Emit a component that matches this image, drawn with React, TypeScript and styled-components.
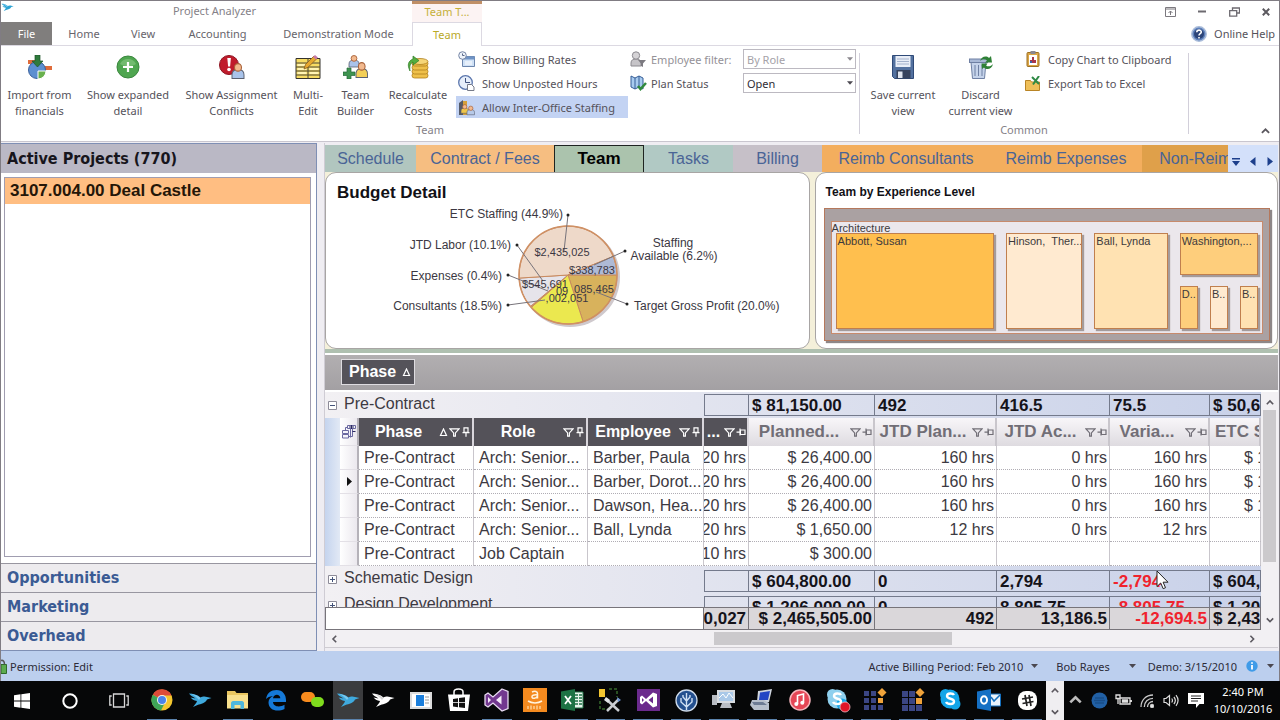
import React from "react";
import styled, { createGlobalStyle, css } from "styled-components";

const ui = `"Noto Sans", "Open Sans", sans-serif`;
const grid = `"Liberation Sans", Arial, sans-serif`;
const head = `"DejaVu Sans Condensed", "DejaVu Sans", sans-serif`;

const GlobalStyle = createGlobalStyle`
  * { box-sizing: border-box; }
  body { margin: 0; font-family: ${ui}; font-size: 11px; color: #55525a; background: #efedf2; }
  button, select { font: inherit; color: inherit; }
  button { border: 0; padding: 0; background: none; cursor: default; }
  h1, h2, ul { margin: 0; padding: 0; font-weight: inherit; font-size: inherit; }
  a { color: inherit; text-decoration: none; }
  svg { display: block; flex: none; }
`;

const Shell = styled.div`
  display: flex;
  flex-direction: column;
  height: 100vh;
  overflow: hidden;
`;

const AppWindow = styled.div`
  position: relative;
  display: flex;
  flex-direction: column;
  flex: 1;
  min-height: 0;
  border: 1px solid #807c83;
  border-width: 1px 1px 0 1px;
`;

/* ---------- title bar ---------- */
const TitleBar = styled.header`
  display: flex;
  height: 21px;
  background: #fff;
`;
const AppMark = styled.div`
  width: 16px;
  padding-top: 2px;
`;
const AppTitle = styled.h1`
  width: 395px;
  line-height: 20px;
  text-align: center;
  color: #858188;
`;
const ContextTitle = styled.div`
  width: 70px;
  border-top: 3px solid #c08f66;
  background: #fcf3f3;
  line-height: 15px;
  text-align: center;
  color: #c5b03a;
`;
const WindowButtons = styled.div`
  display: flex;
  margin-left: auto;
  button {
    width: 32px;
    padding-left: 6px;
    display: flex;
    align-items: center;
    justify-content: center;
  }
`;

const RibbonTabs = styled.nav`
  display: flex;
  height: 24px;
  background: #fff;
  border-bottom: 1px solid #dcd9e2;
`;
const RibbonTab = styled.button<{ $w: number; $kind?: "file" | "active" }>`
  width: ${(p) => p.$w}px;
  line-height: 23px;
  color: #67646b;
  ${(p) =>
    p.$kind === "file" &&
    css`
      background: #807e7d;
      color: #fff;
    `}
  ${(p) =>
    p.$kind === "active" &&
    css`
      height: 24px;
      background: #fff;
      border: 1px solid #dcd9e2;
      border-bottom: 0;
      line-height: 22px;
      color: #b9a928;
    `}
`;
const HelpLink = styled.a`
  display: flex;
  align-items: center;
  gap: 7px;
  margin-left: auto;
  padding-right: 4px;
`;

/* ---------- ribbon ---------- */
const Ribbon = styled.div`
  display: flex;
  height: 96px;
  background: #fff;
  border-bottom: 1px solid #c9c6cf;
`;
const Group = styled.section`
  display: flex;
  flex-direction: column;
`;
const GroupBody = styled.div`
  display: flex;
  height: 75px;
  padding-top: 2px;
`;
const GroupLabel = styled.div`
  line-height: 17px;
  text-align: center;
  color: #858188;
`;
const Divider = styled.div`
  width: 1px;
  margin: 7px 0;
  background: #d2cfda;
`;
const BigButton = styled.button<{ $w: number }>`
  display: flex;
  flex-direction: column;
  align-items: center;
  width: ${(p) => p.$w}px;
  padding-top: 7px;
  line-height: 16px;
  white-space: pre;
  svg {
    margin-bottom: 8px;
  }
`;
const SmallColumn = styled.div<{ $w: number }>`
  display: flex;
  flex-direction: column;
  gap: 2px;
  width: ${(p) => p.$w}px;
`;
const SmallButton = styled.button<{ $on?: boolean }>`
  display: flex;
  align-items: center;
  gap: 7px;
  height: 22px;
  padding-left: 2px;
  white-space: nowrap;
  background: ${(p) => (p.$on ? "#c3d3f3" : "none")};
`;
const IconSlot = styled.span`
  display: flex;
  justify-content: center;
  width: 17px;
  margin-left: 7px;
`;
const FieldRow = styled.div<{ $muted?: boolean }>`
  display: flex;
  align-items: center;
  height: 22px;
  padding: 0 3px 0 2px;
  color: ${(p) => (p.$muted ? "#949197" : "#55525a")};
  label {
    width: 96px;
    padding-left: 4px;
    white-space: nowrap;
  }
`;
const SelectBox = styled.div`
  position: relative;
  flex: 1;
  select {
    width: 100%;
    height: 20px;
    padding: 0 3px;
    appearance: none;
    border: 1px solid #bcb9c1;
    border-radius: 0;
    background: #fff;
    color: #2f2c33;
    opacity: 1;
    display: block;
  }
  select:disabled {
    color: #a5a2a8;
  }
  svg {
    position: absolute;
    right: 3px;
    top: 8px;
  }
`;
const Collapse = styled.button`
  margin-left: auto;
  align-self: flex-end;
  padding: 5px 9px;
`;

/* ---------- workspace ---------- */
const Workspace = styled.main`
  display: flex;
  flex: 1;
  min-height: 0;
  gap: 7px;
  padding-top: 1px;
`;
const Sidebar = styled.aside`
  display: flex;
  flex-direction: column;
  width: 316px;
  flex: none;
  border: 1px solid #7f8fb4;
  border-left: 0;
  background: #fff;
  font-family: ${head};
  font-weight: bold;
  font-size: 16px;
`;
const SideHead = styled.h2`
  height: 29px;
  padding-left: 6px;
  line-height: 29px;
  background: #bab8c5;
  color: #17151c;
  font-weight: bold;
`;
const ProjectList = styled.ul`
  flex: 1;
  margin: 4px 5px 6px 3px;
  border: 1px solid #a09db0;
  list-style: none;
`;
const Project = styled.li`
  height: 26px;
  padding-left: 5px;
  line-height: 26px;
  font-family: ${grid};
  font-size: 17px;
  background: #ffbe82;
  color: #241608;
`;
const SideLink = styled.a`
  height: 29px;
  padding-left: 6px;
  line-height: 27px;
  border-top: 1px solid #9896a0;
  background: #edebee;
  color: #3b5b94;
`;
const Content = styled.section`
  display: flex;
  flex-direction: column;
  flex: 1;
  min-width: 0;
  padding: 2px 1px 3px 0;
  border-left: 1px solid #cfccd4;
`;
const TabStrip = styled.div`
  display: flex;
  height: 27px;
  font-family: ${grid};
  font-size: 16px;
`;
const Tabs = styled.div`
  display: flex;
  flex: 1;
  min-width: 0;
  overflow: hidden;
`;
const ViewTab = styled.button<{ $w: number; $bg: string; $active?: boolean }>`
  flex: none;
  width: ${(p) => p.$w}px;
  background: ${(p) => p.$bg};
  color: #4a6496;
  ${(p) =>
    p.$active &&
    css`
      border: 1px solid #1f2421;
      border-bottom: 0;
      font-weight: bold;
      font-size: 17px;
      color: #000;
    `}
`;
const TabNav = styled.div`
  display: flex;
  align-items: center;
  width: 50px;
  background: #d3e0fa;
  button {
    display: flex;
    flex: 1;
    justify-content: center;
    padding-top: 6px;
  }
`;
const Cards = styled.div`
  display: flex;
  gap: 5px;
  background: #f4f0da;
  border-bottom: 4px solid #afc0b0;
  font-family: ${grid};
`;
const Card = styled.section<{ $grow: number }>`
  flex: ${(p) => p.$grow} 1 0;
  min-width: 0;
  height: 177px;
  padding: 0 7px 0 8px;
  border: 1px solid #a8a5a4;
  border-radius: 11px;
  background: #fff;
`;
const CardTitle = styled.h2<{ $size: number }>`
  height: 35px;
  padding: 4px 0 0 2px;
  line-height: 31px;
  font-size: ${(p) => p.$size}px;
  font-weight: bold;
  color: #121116;
`;
const PieTitle = styled(CardTitle)`
  height: 32px;
  padding-left: 3px;
`;

/* tree map */
const MapFrame = styled.div`
  height: 133px;
  padding: 12px 6px 6px;
  border: 1px solid #b5785c;
  background: #aaa1a2;
  box-shadow: 2px 2px 1px #8d8788;
`;
const MapGroup = styled.div`
  height: 113px;
  padding: 0 4px 4px;
  border: 1px solid #c78a6c;
  background: #ebe7ec;
  font-size: 11px;
  line-height: 12px;
  color: #3d3a3c;
`;
const MapLabel = styled.div`
  height: 11px;
  margin-left: -4px;
`;
const MapRow = styled.div<{ $h: number }>`
  display: flex;
  gap: 12px;
  height: ${(p) => p.$h}px;
`;
const MapStack = styled.div`
  display: flex;
  flex-direction: column;
  gap: 11px;
  flex: 81 1 0;
  min-width: 0;
`;
const Tile = styled.div<{ $grow: number; $bg: string }>`
  flex: ${(p) => p.$grow} 1 0;
  min-width: 0;
  padding: 1px 0 0 1px;
  overflow: hidden;
  white-space: pre;
  border: 1px solid #c07f4e;
  background: ${(p) => p.$bg};
  box-shadow: 2px 2px 1px #a49b9b;
`;

/* ---------- data grid ---------- */
const GroupPanel = styled.div`
  height: 39px;
  padding: 4px 16px;
  border: solid #fff;
  border-width: 2px 0 2px;
  background: linear-gradient(#b2afb1, #a3a0a3);
  font-family: ${grid};
`;
const GroupChip = styled.button`
  display: flex;
  align-items: center;
  gap: 6px;
  width: 74px;
  height: 26px;
  padding-left: 7px;
  border: 1px solid #dedce0;
  background: #55535a;
  color: #fff;
  font-size: 16px;
  font-weight: bold;
`;
const GridArea = styled.div`
  display: flex;
  flex: 1;
  min-height: 0;
  background: #f2f0f3;
`;
const GridMain = styled.div`
  display: flex;
  flex-direction: column;
  flex: 1;
  min-width: 0;
`;
const GridBody = styled.div`
  flex: 1;
  min-height: 0;
  overflow: hidden;
`;
const Table = styled.table`
  width: 100%;
  table-layout: fixed;
  border-collapse: separate;
  border-spacing: 0;
  font-family: ${grid};
  font-size: 16px;
  color: #3d3a42;
  td,
  th {
    padding: 0;
    overflow: hidden;
    white-space: nowrap;
    text-align: left;
  }
`;
const GroupTr = styled.tr`
  background: linear-gradient(90deg, #f2f0f3 0%, #e6e7f0 30%, #c8d1e9 100%);
  > td {
    height: 26px;
    vertical-align: top;
  }
`;
const GroupName = styled.div`
  display: flex;
  align-items: center;
  gap: 7px;
  height: 23px;
  padding-left: 3px;
  button {
    padding-top: 4px;
  }
`;
const Sum = styled.div<{ $first?: boolean; $neg?: boolean; $lead: number }>`
  height: 22px;
  margin-top: ${(p) => p.$lead}px;
  padding-left: 3px;
  line-height: 21px;
  border: 1px solid #747a8c;
  border-left-width: ${(p) => (p.$first ? 1 : 0)}px;
  font-size: 17px;
  font-weight: bold;
  color: ${(p) => (p.$neg ? "#f0232d" : "#15131a")};
`;
const Indent = styled.td`
  background: linear-gradient(90deg, #c5d4ee, #e2e9f5);
`;
const Selector = styled.td`
  border-bottom: 1px solid #e3e0e6;
  border-right: 2px solid #b5b2b9;
  background: linear-gradient(90deg, #fff, #ebe8ee);
  svg {
    margin-left: 7px;
  }
`;
const ChooserCell = styled(Selector)`
  svg {
    margin-left: 2px;
  }
`;
const Th = styled.th<{ $dark?: boolean }>`
  height: 28px;
  font-size: ${(p) => (p.$dark ? 16 : 17)}px;
  font-weight: bold;
  border-right: 2px solid #d9d6dc;
  ${(p) =>
    p.$dark
      ? css`
          background: #545259;
          color: #fff;
        `
      : css`
          background: linear-gradient(#f8f6f9, #dedbe0);
          color: #716e76;
          border-right-color: #c9c6cc;
        `}
`;
const ThInner = styled.div`
  display: flex;
  align-items: center;
  justify-content: flex-end;
  gap: 1px;
  height: 28px;
  padding-right: 1px;
  span {
    flex: 1;
    text-align: center;
  }
`;
const Td = styled.td`
  height: 24px;
  border-right: 1px solid #c9c6cc;
  border-bottom: 1px dotted #b0adb4;
  background: #fff;
`;
const TextCell = styled.div`
  padding-left: 5px;
  white-space: nowrap;
`;
const NumCell = styled.div<{ $neg?: boolean }>`
  display: flex;
  justify-content: flex-end;
  padding-right: 2px;
  overflow: hidden;
  color: ${(p) => (p.$neg ? "#f0232d" : "inherit")};
`;
const CutCell = styled.div`
  padding-left: 34px;
  overflow: hidden;
`;
const FootTd = styled.td<{ $blank?: boolean }>`
  height: 23px;
  border: 1px solid #77747a;
  border-left-width: ${(p) => (p.$blank ? 1 : 0)}px;
  background: ${(p) => (p.$blank ? "#fff" : "#dad7da")};
  font-size: 17px;
  font-weight: bold;
  color: #15131a;
`;
const FootCut = styled.div`
  padding-left: 3px;
`;
const VScroll = styled.div`
  display: flex;
  flex-direction: column;
  align-items: center;
  width: 17px;
  padding: 7px 0 6px;
  background: #f2f0f3;
`;
const VThumb = styled.div`
  width: 13px;
  flex: 153 1 0;
  margin-top: 3px;
  background: #cbc9cc;
`;
const VRest = styled.div`
  flex: 54 1 0;
`;
const HScroll = styled.div`
  display: flex;
  align-items: center;
  height: 18px;
  padding: 0 22px 0 6px;
  border-bottom: 1px solid #cfccd2;
  background: #f2f0f3;
`;
const HSpace = styled.div<{ $grow: number }>`
  flex: ${(p) => p.$grow} 1 0;
`;
const HThumb = styled.div`
  flex: 238 1 0;
  height: 13px;
  background: #cbc9cc;
`;

/* ---------- status bar ---------- */
const StatusBar = styled.footer`
  display: flex;
  align-items: center;
  height: 30px;
  padding-right: 5px;
  background: #bccfee;
  color: #2c2b38;
`;
const Permission = styled.span`
  display: flex;
  align-items: center;
  gap: 3px;
  margin-right: auto;
`;
const StatusItem = styled.button<{ $gap: number; $ml: number }>`
  display: flex;
  align-items: center;
  gap: ${(p) => p.$gap}px;
  margin-left: ${(p) => p.$ml}px;
`;

/* ---------- taskbar ---------- */
const Taskbar = styled.div`
  display: flex;
  height: 39px;
  padding-right: 4px;
  background: #060708;
  color: #fff;
`;
const SystemButton = styled.button<{ $w: number }>`
  display: flex;
  align-items: center;
  justify-content: center;
  width: ${(p) => p.$w}px;
`;
const Apps = styled.div`
  display: flex;
  flex: 1;
`;
const AppButton = styled.button<{ $run?: boolean; $active?: boolean }>`
  display: flex;
  flex: 1;
  align-items: center;
  justify-content: center;
  margin: 0 4px;
  border-bottom: 1px solid ${(p) => (p.$run ? "#5b83ad" : "transparent")};
  ${(p) =>
    p.$active &&
    css`
      margin: 0 1px;
      background: #3b3c3e;
    `}
`;
const TaskScroll = styled.div`
  display: flex;
  flex-direction: column;
  justify-content: space-between;
  align-items: center;
  width: 18px;
  padding: 6px 0 4px;
  background: #efeef1;
`;
const Tray = styled.div`
  display: flex;
  align-items: center;
`;
const Clock = styled.time`
  width: 66px;
  padding-top: 2px;
  text-align: center;
  line-height: 17px;
  white-space: nowrap;
`;
const Pointer = styled.svg`
  position: absolute;
  left: 90.4%;
  bottom: 91px;
`;

/* ---------- small drawings ---------- */
const Chevron = ({ dir, w = 8, c = "#5b585f" }: { dir: "up" | "down" | "left" | "right"; w?: number; c?: string }) => {
  const d = {
    up: "M1 6.5 5 2.5 9 6.5",
    down: "M1 3 5 7 9 3",
    left: "M6.5 1 2.5 5 6.5 9",
    right: "M3 1 7 5 3 9",
  }[dir];
  return (
    <svg width={w} height={w} viewBox="0 0 10 10" fill="none" stroke={c} strokeWidth="2">
      <path d={d} />
    </svg>
  );
};
const Caret = ({ c = "#4b4850", w = 7 }: { c?: string; w?: number }) => (
  <svg width={w} height="4" viewBox="0 0 7 4" fill={c}>
    <path d="M0 0h7L3.5 4z" />
  </svg>
);
const Asc = () => (
  <svg width="9" height="9" viewBox="0 0 9 9" fill="none" stroke="currentColor" strokeWidth="1.2">
    <path d="M4.5 1 7.5 7.5h-6z" />
  </svg>
);
const Funnel = () => (
  <svg width="11" height="9" viewBox="0 0 12 10" fill="none" stroke="currentColor" strokeWidth="1.3">
    <path d="M1 1h10L7 5.5V9H5V5.5z" />
  </svg>
);
const Pin = ({ side }: { side?: boolean }) => (
  <svg width="10" height="10" viewBox="0 0 10 10" fill="none" stroke="currentColor" strokeWidth="1.2">
    {side ? <path d="M9 3v4.500H4.400V3zM4 1.500v7M4 5.200H.5" /> : <path d="M3 .8h4v4.600H3zM1.500 5.600h7M5 6v3.800" />}
  </svg>
);
const Expander = ({ open }: { open?: boolean }) => (
  <svg width="9" height="9" viewBox="0 0 9 9" fill="none" stroke="#8d8b98">
    <path d="M.5.5h8v8h-8z" fill="#fff" />
    <path d={open ? "M2 4.5h5" : "M2 4.5h5M4.5 2v5"} stroke="#44537a" />
  </svg>
);
const FieldChooser = () => (
  <svg width="14" height="15" viewBox="0 0 14 15" fill="#f4f3fa" stroke="#6a68a0">
    <path d="M3.500 3.500h7v9h-7z" />
    <path d="M5.500 1.500h8v3h-8z" />
    <path d="M.5 6.500h6v3h-6zM.5 10.500h6v3.500h-6zM8.500 4.500v9" />
    <path d="M7 3h5M9.500 1v4M10.500 7.500h3" stroke="#2c2a60" />
  </svg>
);
const Bird = ({ w = 24, c = "#3fa9dd", c2 = "#7cc9ee" }: { w?: number; c?: string; c2?: string }) => (
  <svg width={w} height={(w * 2) / 3} viewBox="0 0 24 16">
    <path d="M1 1.500c4 0 8 1 11.500 4C14 4.500 17 4 19 5l4.500 1-4.500 1.500C17.500 11 13 12 9.500 13L5 15c2-2.500 3.500-4 4-6C6 8.500 3.500 7 2.500 5.500l5 1C5 5 2.500 3.500 1 1.500z" fill={c} />
    <path d="M3 1.800c4 .8 7 2 9.500 4.200L11 8C8.500 5 6 3.300 3 1.800z" fill={c2} />
  </svg>
);
const Person = ({ x, y, body }: { x: number; y: number; body: string }) => (
  <g transform={`translate(${x} ${y})`}>
    <path d="M0 12V9c0-3 2-4 5-4s5 1 5 4v3z" fill={body} stroke="#5a6070" strokeWidth=".8" />
    <circle cx="5" cy="3.400" r="2.900" fill="#f2b98e" stroke="#a86138" strokeWidth=".9" />
  </g>
);

const icons = {
  importFin: (
    <svg width="24" height="24" viewBox="0 0 24 24">
      <path d="M0 5h8v4H0zM16 11h8v4h-8z" fill="#e06c3b" />
      <circle cx="9" cy="15" r="8.500" fill="#5c8fd0" stroke="#3c619c" />
      <path d="M10 16h8a8 8 0 0 1-8 8z" fill="#69b14e" stroke="#fff" />
      <path d="M7 0h5v6h3l-5.500 6L4 6h3z" fill="#2f7a3c" stroke="#1d5528" strokeWidth=".7" />
    </svg>
  ),
  expand: (
    <svg width="24" height="24" viewBox="0 0 24 24">
      <circle cx="12" cy="12" r="11" fill="#4fa650" stroke="#3a873e" />
      <path d="M4 9a9 9 0 0 1 16 0c-5 3-11 3-16 0z" fill="#8aca84" opacity=".6" />
      <path d="M12 7v10M7 12h10" stroke="#fff" strokeWidth="2.200" />
    </svg>
  ),
  conflict: (
    <svg width="26" height="24" viewBox="0 0 26 24">
      <circle cx="10" cy="10" r="9.500" fill="#c01c2c" stroke="#8e1420" />
      <path d="M8.300 3h3.600l-.8 8.500h-2z" fill="#fff" />
      <circle cx="10" cy="14.500" r="1.800" fill="#fff" />
      <g transform="translate(13 8) scale(1.200 1.300)">
        <Person x={0} y={0} body="#a9c3ea" />
      </g>
    </svg>
  ),
  multi: (
    <svg width="26" height="24" viewBox="0 0 26 24">
      <path d="M1 3.500h24v20H1z" fill="#f7dc62" stroke="#34322c" />
      <path d="M1 8h24M1 12h24M1 16h24M1 20h24M13 3.500v20" stroke="#4a4638" strokeWidth="1" />
      <path d="M2.500 10h9M14.500 18h9M2.500 18h9M2.500 14h9M14.500 14h9" stroke="#fff4b4" strokeWidth="2" />
      <path d="m9 14 1.500-4.500L19 1l3 2.500-9 8.800z" fill="#e7a92f" stroke="#8a5e1a" strokeWidth=".8" />
      <path d="m18 2 2-2 3 2.500-2 2z" fill="#c879a7" />
    </svg>
  ),
  builder: (
    <svg width="25" height="24" viewBox="0 0 25 24">
      <Person x={6} y={0} body="#a9c3ea" />
      <g transform="translate(13 7) scale(1.150 1.300)">
        <Person x={0} y={0} body="#f3cf57" />
      </g>
      <path d="M4 13h4v4h4v3.500H8v3.500H4v-3.500H0V17h4z" fill="#3f9450" stroke="#24683a" strokeWidth=".7" />
    </svg>
  ),
  recalc: (
    <svg width="22" height="24" viewBox="0 0 22 24">
      <g fill="#efc04a" stroke="#b07f1c" strokeWidth=".8">
        <rect x="5" y="18" width="16" height="5" rx="2.500" />
        <rect x="5" y="14" width="16" height="5" rx="2.500" />
        <rect x="5" y="10" width="16" height="5" rx="2.500" />
        <rect x="5" y="6" width="16" height="5" rx="2.500" />
        <ellipse cx="13" cy="6.500" rx="8" ry="3" fill="#f6d678" />
      </g>
      <path d="M3 16C0 10 1 6 6 4V1l6 4.500L6 10V7c-3 1.500-3.500 4-3 9z" fill="#55ad3f" stroke="#2f7d28" strokeWidth=".7" />
    </svg>
  ),
  rates: (
    <svg width="17" height="16" viewBox="0 0 17 16">
      <path d="M4.500 5.500h12v10h-12z" fill="#cfe1f6" stroke="#6c86ad" />
      <path d="M4.500 5.500h12v3h-12z" fill="#6f93c5" />
      <circle cx="4.500" cy="4.500" r="3.800" fill="#eef3fa" stroke="#7484a4" />
      <path d="M4.500 2.500v2h2" stroke="#5a6888" fill="none" />
      <path d="M7 11h7M7 13h7" stroke="#fff" />
    </svg>
  ),
  hours: (
    <svg width="17" height="16" viewBox="0 0 17 16">
      <circle cx="7.500" cy="7.500" r="6.800" fill="#e6eefa" stroke="#5b76ad" strokeWidth="1.300" />
      <path d="M7.500 3v4.500H12" stroke="#40527e" fill="none" />
      <path d="M9.500 9.500h4l2.500 2.500v3.500H9.500z" fill="#fff" stroke="#767a88" />
    </svg>
  ),
  office: (
    <svg width="17" height="17" viewBox="0 0 17 17">
      <path d="M1 4 5 1v15H1z" fill="#555a66" />
      <path d="M5 2h4v14H5z" fill="#d6a03a" />
      <g transform="scale(.75)">
        <Person x={4} y={7} body="#f0c74a" />
        <Person x={12} y={9} body="#b6c9e8" />
      </g>
    </svg>
  ),
  filterPerson: (
    <svg width="17" height="16" viewBox="0 0 17 16">
      <path d="M1 15v-3c0-3 2-4 5-4s5 1 5 4v3z" fill="#c6c4c8" stroke="#8c8a90" />
      <circle cx="6" cy="4.500" r="3.700" fill="#d5d3d6" stroke="#8c8a90" />
      <path d="M8 9h8l-3 3.500V16l-2-1v-2.500z" fill="#7c7a80" />
    </svg>
  ),
  plan: (
    <svg width="17" height="16" viewBox="0 0 17 16">
      <path d="m1 1 4 2 4-2 4 2v11l-4-2-4 2-4-2z" fill="#a8cbef" stroke="#355d96" />
      <path d="M5 3v11M9 1v11" stroke="#355d96" />
      <path d="m8 11 2.500 3L16 8" stroke="#318a3c" strokeWidth="2.500" fill="none" />
    </svg>
  ),
  save: (
    <svg width="24" height="24" viewBox="0 0 24 24">
      <path d="M1.500.5h21v23h-19l-2-2z" fill="#53719f" stroke="#2f4a78" />
      <path d="M4.500 1h15v11h-15z" fill="#e9eef7" />
      <path d="M6 4h12M6 6.500h12M6 9h12" stroke="#a4b2cc" />
      <path d="M5.500 15h14v8.500h-14z" fill="#37435d" />
      <path d="M7 16.500h4.500V23H7z" fill="#dfe4ee" />
    </svg>
  ),
  discard: (
    <svg width="26" height="24" viewBox="0 0 26 24">
      <path d="M3 7h15l-1.500 16.500h-12z" fill="#c5d3ea" stroke="#6f80a3" />
      <path d="M7 10v11M10.500 10v11M14 10v11" stroke="#6f80a3" />
      <rect x="1.500" y="4" width="18" height="3.500" fill="#a9b9d6" stroke="#6f80a3" />
      <path d="M12 6c1-4 6-6 9-3l2-2 1 6.500h-7l2-2c-2-2-5-1.500-7 .5zM25 9c-1 5-6 6.500-9 3.500L14 14l-.5-5.500h6L18 10.500c2 1.500 5 1 7-1.500z" fill="#2f8136" />
    </svg>
  ),
  clipboard: (
    <svg width="14" height="16" viewBox="0 0 14 16">
      <rect x="1" y="1.500" width="12" height="14" rx="1" fill="#dba646" stroke="#9c6f22" />
      <path d="M3 4h8v10H3z" fill="#fff" />
      <path d="M4.500 0h5v3h-5z" fill="#8a8790" />
      <path d="M4 12V9h2V6h2v3h2v3z" fill="#a8364a" />
      <path d="M4 10h2v2H4z" fill="#3d62a5" />
    </svg>
  ),
  exportXls: (
    <svg width="16" height="15" viewBox="0 0 16 15">
      <path d="M.5 4.500h5l1 1.500h8v8.500H.5z" fill="#efbf58" stroke="#b98425" />
      <path d="m7 1 7 7M14 0 8 8.500" stroke="#2f8a46" strokeWidth="2" />
    </svg>
  ),
};

const VS = ({ box }: { box?: boolean }) => (
  <svg width="25" height="24" viewBox="0 0 25 24">
    {box ? <path d="M1 1h23v22H1z" fill="#6b2a8d" /> : null}
    <path
      d={box ? "M17 4.500 21 6v12l-4 1.500-7-6.500-4 3.500-2-1.500V9l2-1.500 4 3.500z" : "M18 1l6 2.500v17L18 23l-9-8-5 4-3-2V7l3-2 5 4z"}
      fill={box ? "#fff" : "#72388f"}
      stroke={box ? "none" : "#e9dcf2"}
      strokeWidth="1.300"
    />
    <path d={box ? "M17 8.500v7L12.500 12zM6 10v4l2-2z" : "M17.500 7.500v9L12 12zM4 9v6l3-3z"} fill={box ? "#6b2a8d" : "#f3eaf8"} />
  </svg>
);
const Skype = ({ busy }: { busy?: boolean }) => (
  <svg width="26" height="26" viewBox="0 0 26 26">
    <circle cx="12" cy="12" r="9.500" fill={busy ? "#8fd0ee" : "#13a5e8"} />
    <circle cx="7.500" cy="7.500" r="5.500" fill={busy ? "#8fd0ee" : "#13a5e8"} />
    <circle cx="17" cy="17" r="5.500" fill="#13a5e8" />
    <path d="M16 8c-1-2-7-2.500-7 1 0 3.500 7 2 7 5.500s-6.500 3-8 .5" fill="none" stroke="#fff" strokeWidth="2.400" />
    {busy ? <circle cx="20" cy="20" r="5" fill="#e01528" stroke="#f7b9bf" strokeWidth=".8" /> : null}
  </svg>
);
const Tiles = ({ big }: { big?: boolean }) => (
  <svg width="25" height="24" viewBox="0 0 25 24">
    {[0, 1, 2].map((r) =>
      [0, 1, 2].map((c) => (
        <rect
          key={`${r}${c}`}
          x={c * 7 + 1}
          y={r * 7 + 3}
          width={big ? 6 : 5}
          height={big ? 6 : 5}
          fill={c === 2 && r === 1 ? "#f0a33a" : "#3b4684"}
          opacity={c === 2 && r === 0 ? 0 : 1}
        />
      ))
    )}
    <path d="m19 0 4.500 4.500L19 9l-4.500-4.500z" fill="#f0a33a" />
  </svg>
);

type AppItem = { name: string; run?: boolean; active?: boolean; art: React.ReactNode };
const apps: AppItem[] = [
  {
    name: "Chrome",
    run: true,
    art: (
      <svg width="22" height="22" viewBox="0 0 22 22">
        <circle cx="11" cy="11" r="10.500" fill="#f3c62f" />
        <path d="M11 11 1.800 5.700A10.500 10.500 0 0 1 20.500 6.500H11z" fill="#dd4b39" />
        <path d="M11 11 1.800 5.700A10.500 10.500 0 0 0 10 21.500l4-8z" fill="#3fa557" />
        <circle cx="11" cy="11" r="5" fill="#f5f3f0" />
        <circle cx="11" cy="11" r="4" fill="#4a83ea" />
      </svg>
    ),
  },
  { name: "Vision", art: <Bird w={24} /> },
  {
    name: "File Explorer",
    run: true,
    art: (
      <svg width="23" height="20" viewBox="0 0 23 20">
        <path d="M1 1h8l1.500 2H22v15H1z" fill="#e9c660" />
        <path d="M1 5h21v13.500H1z" fill="#f8e08e" />
        <path d="M5 19v-6c0-1 1-2 2-2h9c1 0 2 1 2 2v6h-3.500v-4h-6v4z" fill="#4fb7dc" />
      </svg>
    ),
  },
  {
    name: "Edge",
    art: (
      <svg width="22" height="22" viewBox="0 0 22 22">
        <path d="M1 10C2 4 6 1 11.500 1 18 1 21 6 21 11v2H8c.3 5 7 5.500 11.500 2.700V20C12 23.500 3.500 21 3.500 13.500c0-3 1.500-5 4.500-6.500-3.500.3-5.500 1.500-7 3zM8 9.300h7.300C15.300 4.500 8.500 4.500 8 9.300z" fill="#1579d8" />
      </svg>
    ),
  },
  {
    name: "Chat",
    art: (
      <svg width="24" height="16" viewBox="0 0 24 16">
        <rect x="0" y="0" width="14" height="10" rx="5" fill="#f78b1e" />
        <rect x="10" y="5" width="13" height="10" rx="5" fill="#7fdc1d" />
      </svg>
    ),
  },
  { name: "Vision Client", run: true, active: true, art: <Bird w={24} /> },
  { name: "Vision Admin", art: <Bird w={24} c="#fff" c2="#d5d5d5" /> },
  {
    name: "News",
    art: (
      <svg width="22" height="17" viewBox="0 0 22 17">
        <path d="M0 0h22v17H0z" fill="#dcdcdc" />
        <path d="M2 2h18v13H2z" fill="#fff" />
        <path d="M6 3h8v11H6z" fill="#1c7fdc" />
        <path d="M15 5h4M15 8h4M15 11h4" stroke="#999" />
      </svg>
    ),
  },
  {
    name: "Store",
    art: (
      <svg width="22" height="24" viewBox="0 0 22 24">
        <path d="M6 7V4c0-4 9-4 9 0v3" fill="none" stroke="#fff" strokeWidth="1.500" />
        <path d="M0 6.500h22L20 23H2z" fill="#fff" />
        <path d="m5 11 5-.8v4H5zM11 10l6-.8v5h-6zM5 15h5v4.200l-5-.7zM11 15h6v5l-6-.7z" fill="#111" />
      </svg>
    ),
  },
  { name: "Visual Studio", run: true, art: <VS /> },
  {
    name: "Music",
    art: (
      <svg width="24" height="24" viewBox="0 0 24 24">
        <path d="M0 0h24v24H0z" fill="#f48a1f" />
        <path d="M9 4c3-1.500 5.500-.5 5.500 1.500v5M14.500 7c-4-.5-6 .5-5.500 2.200.5 1.800 4.500 1.300 5.500-1.200M5 13c4 2.500 10 2.500 14 0" fill="none" stroke="#fff3dd" strokeWidth="1.500" />
        <path d="M5 18v3M8 17.500v4M11 18v3M14 17.500v4M17 18v3" stroke="#ffd9a3" strokeWidth="1.300" />
      </svg>
    ),
  },
  {
    name: "Excel",
    run: true,
    art: (
      <svg width="23" height="22" viewBox="0 0 23 22">
        <path d="M12 3h10v16H12z" fill="#e8f3ec" stroke="#1e7244" />
        <path d="M14 6h3M18 6h3M14 9h3M18 9h3M14 12h3M18 12h3M14 15h3M18 15h3" stroke="#1e7244" strokeWidth="1.500" />
        <path d="M0 2.500 14 0v22L0 19.500z" fill="#1d7244" />
        <path d="m4 7 6 8M10 7l-6 8" stroke="#fff" strokeWidth="1.800" />
      </svg>
    ),
  },
  {
    name: "Tools",
    run: true,
    art: (
      <svg width="24" height="24" viewBox="0 0 24 24">
        <path d="M1 1h6v8H1z" fill="#f2c531" />
        <path d="M11 1h8v8M2 13v8h8" fill="none" stroke="#4d9a3c" strokeDasharray="3 2" />
        <path d="m8 11 13 12M21 11 9 23" stroke="#c9ccd1" strokeWidth="2.500" />
        <path d="m8 9 4 3-2 3-4-3z" fill="#dfe2e6" />
        <path d="m19 9 4 3-3 2z" fill="#6a93cf" />
      </svg>
    ),
  },
  { name: "Visual Studio Blend", run: true, art: <VS box /> },
  {
    name: "SourceTree",
    run: true,
    art: (
      <svg width="23" height="23" viewBox="0 0 23 23">
        <circle cx="11.500" cy="11.500" r="10.500" fill="#24508f" stroke="#cfdcec" strokeWidth="1.300" />
        <path d="M11.500 4v17M11.500 18 6 13V9M11.500 18l5.500-5V9M11.500 12 8 8V6M11.500 12 15 8V6" fill="none" stroke="#cfe0f4" strokeWidth="1.400" />
      </svg>
    ),
  },
  {
    name: "Monitor",
    run: true,
    art: (
      <svg width="24" height="22" viewBox="0 0 24 22">
        <path d="M5 1h18v13H5z" fill="#d7dbe0" />
        <path d="M7 3h14v9H7z" fill="#a9c8e8" />
        <path d="m7 9 4-4 3 4 3-5 4 5" stroke="#fff" fill="none" />
        <path d="M0 6h5v10H0zM10 14h8l2 5H8z" fill="#b9bdc4" />
      </svg>
    ),
  },
  {
    name: "Remote Desktop",
    run: true,
    art: (
      <svg width="24" height="23" viewBox="0 0 24 23">
        <path d="m8 2 14-2-3 13H7z" fill="#cfd5de" />
        <path d="m10 3.500 10-1.500-2 9H9z" fill="#2346c4" />
        <path d="M2 11h12l5 3v7H4l-4-5z" fill="#b7bfcc" />
        <path d="M2 13h11l4 3H4z" fill="#6d7b94" />
      </svg>
    ),
  },
  {
    name: "iTunes",
    run: true,
    art: (
      <svg width="22" height="22" viewBox="0 0 22 22">
        <circle cx="11" cy="11" r="10" fill="#e64656" stroke="#f7b6bd" strokeWidth="1.500" />
        <path d="M8.500 15V6.500l6-1.500v8.500" fill="none" stroke="#fff" strokeWidth="1.600" />
        <circle cx="7.300" cy="15" r="2" fill="#fff" />
        <circle cx="13.300" cy="13.800" r="2" fill="#fff" />
      </svg>
    ),
  },
  { name: "Skype for Business", run: true, art: <Skype busy /> },
  { name: "Deploy", run: true, art: <Tiles /> },
  { name: "Deploy Server", run: true, art: <Tiles big /> },
  { name: "Skype", run: true, art: <Skype /> },
  {
    name: "Outlook",
    run: true,
    art: (
      <svg width="24" height="22" viewBox="0 0 24 22">
        <path d="M13 5h10.500v12H13z" fill="#eaf3fb" stroke="#1570bf" />
        <path d="m14 8 3 4 6-6" fill="none" stroke="#1570bf" strokeWidth="1.500" />
        <path d="M0 2.500 14 0v22L0 19.500z" fill="#1570c4" />
        <ellipse cx="7" cy="11" rx="3" ry="3.800" fill="none" stroke="#fff" strokeWidth="2" />
      </svg>
    ),
  },
  {
    name: "Slack",
    run: true,
    art: (
      <svg width="19" height="19" viewBox="0 0 19 19">
        <rect width="19" height="19" rx="8" fill="#fff" />
        <path d="m7 4 2 11M11 4l2 11M4 8l11-2M4.500 12.500l11-2" stroke="#222" strokeWidth="1.700" />
      </svg>
    ),
  },
];

/* ---------- pie chart ---------- */
const CX = 568;
const CY = 274;
const R = 49;
const slices = [
  { pct: 20.0, fill: "#d8b25c" },
  { pct: 18.5, fill: "#ebe84f" },
  { pct: 0.4, fill: "#c9a36f" },
  { pct: 10.1, fill: "#e6e4ea" },
  { pct: 44.8, fill: "#eed9c9" },
  { pct: 6.2, fill: "#aebad6" },
];
const at = (pct: number) => {
  const a = (pct / 100) * Math.PI * 2;
  return `${(CX + R * Math.cos(a)).toFixed(1)} ${(CY + R * Math.sin(a)).toFixed(1)}`;
};
const callouts: [string, number, number, "start" | "middle" | "end"][] = [
  ["ETC Staffing (44.9%)", 563, 217, "end"],
  ["JTD Labor (10.1%)", 511, 248, "end"],
  ["Expenses (0.4%)", 502, 279, "end"],
  ["Consultants (18.5%)", 502, 309, "end"],
  ["Staffing", 673, 246, "middle"],
  ["Available (6.2%)", 674, 259, "middle"],
  ["Target Gross Profit (20.0%)", 634, 309, "start"],
];
const leaders: [number, number, number, number][] = [
  [568, 214, 564, 250],
  [517, 244, 543, 280],
  [508, 274, 548, 290],
  [508, 304, 545, 299],
  [625, 250, 594, 264],
  [627, 303, 596, 291],
];
const values: [string, number, number][] = [
  ["$2,435,025", 562, 255],
  ["$338,783", 592, 273],
  ["085,465", 594, 292],
  ["$545,691", 545, 287],
  ["09", 562, 294],
  [",002,051", 567, 301],
];

const ChartSvg = styled.svg`
  margin-left: 46px;
  font-family: ${grid};
  font-size: 12px;
  fill: #3b3742;
`;

const Pie = () => {
  let sum = 0;
  return (
    <ChartSvg width="410" height="130" viewBox="380 204 410 130" role="img" aria-label="Budget detail by category">
      <circle cx={CX + 2} cy={CY + 2} r={R + 1} fill="#cfc9cd" />
      {slices.map((s, i) => {
        const a = sum;
        sum += s.pct;
        return (
          <path
            key={i}
            d={`M${CX} ${CY}L${at(a)}A${R} ${R} 0 0 1 ${at(sum)}Z`}
            fill={s.fill}
            stroke="#c98a5f"
          />
        );
      })}
      <circle cx={CX} cy={CY} r={R} fill="none" stroke="#cf9064" strokeWidth="1.500" />
      {leaders.map(([a, b, c, d]) => (
        <g key={`${a}${b}`}>
          <path d={`M${a} ${b}L${c} ${d}`} stroke="#77737a" strokeWidth="1" />
          <circle cx={a} cy={b} r="1.500" fill="#222" />
        </g>
      ))}
      {values.map(([t, x, y]) => (
        <text key={t} x={x} y={y} textAnchor="middle" fontSize="11">
          {t}
        </text>
      ))}
      {callouts.map(([t, x, y, anchor]) => (
        <text key={t} x={x} y={y} textAnchor={anchor}>
          {t}
        </text>
      ))}
    </ChartSvg>
  );
};

/* ---------- grid ---------- */
const colWidths = [15, 19, 115, 114, 116, 45, 126, 122, 113, 100];
const Cols = () => (
  <colgroup>
    {colWidths.map((w, i) => (
      <col key={i} style={{ width: w }} />
    ))}
    <col />
  </colgroup>
);

const rows = [
  ["Pre-Contract", "Arch:  Senior...", "Barber, Paula", "20 hrs", "$ 26,400.00", "160 hrs", "0 hrs", "160 hrs", "$ 1"],
  ["Pre-Contract", "Arch:  Senior...", "Barber,  Dorot...", "20 hrs", "$ 26,400.00", "160 hrs", "0 hrs", "160 hrs", "$ 1"],
  ["Pre-Contract", "Arch:  Senior...", "Dawson,  Hea...", "20 hrs", "$ 26,400.00", "160 hrs", "0 hrs", "160 hrs", "$ 1"],
  ["Pre-Contract", "Arch:  Senior...", "Ball, Lynda", "20 hrs", "$ 1,650.00", "12 hrs", "0 hrs", "12 hrs", ""],
  ["Pre-Contract", "Job Captain", "", "10 hrs", "$ 300.00", "", "", "", ""],
];

const GroupRow = ({ name, open, sums }: { name: string; open?: boolean; sums: string[] }) => (
  <GroupTr>
    <td colSpan={5}>
      <GroupName>
        <button aria-label={`Toggle ${name}`}>
          <Expander open={open} />
        </button>
        {name}
      </GroupName>
    </td>
    {sums.map((s, i) => (
      <td key={i}>
        <Sum $first={i === 0} $neg={s.startsWith("-")} $lead={open ? 2 : 4}>
          {s || "\u00a0"}
        </Sum>
      </td>
    ))}
  </GroupTr>
);

const darkHeads = [
  ["Phase", true],
  ["Role", false],
  ["Employee", false],
] as const;

const bigButtons: [string, keyof typeof icons, number][] = [
  ["Import from\nfinancials", "importFin", 77],
  ["Show expanded\ndetail", "expand", 100],
  ["Show Assignment\nConflicts", "conflict", 107],
  ["Multi-\nEdit", "multi", 46],
  ["Team\nBuilder", "builder", 49],
  ["Recalculate\nCosts", "recalc", 76],
];

const viewTabs: [string, number, string][] = [
  ["Schedule", 91, "#b1c6bf"],
  ["Contract / Fees", 138, "#f6be81"],
  ["Team", 90, "#abc3ad"],
  ["Tasks", 89, "#b1c9c4"],
  ["Billing", 89, "#c6c0c8"],
  ["Reimb Consultants", 168, "#f3ae5e"],
  ["Reimb Expenses", 152, "#f3ae5e"],
  ["Non-Reimb Expenses", 190, "#dfa04a"],
];

export default function App() {
  return (
    <Shell>
      <GlobalStyle />
      <AppWindow>
        <TitleBar>
          <AppMark>
            <Bird w={13} c="#2ba3d4" />
          </AppMark>
          <AppTitle>Project Analyzer</AppTitle>
          <ContextTitle>Team T...</ContextTitle>
          <WindowButtons>
            <button aria-label="Ribbon display options">
              <svg width="11" height="10" viewBox="0 0 11 10" fill="none" stroke="#7c797f">
                <path d="M.5.5h10v9H.5zM.5 2h10M5.500 8V4M3.500 6l2-2 2 2" />
              </svg>
            </button>
            <button aria-label="Minimize">
              <svg width="8" height="3" viewBox="0 0 8 3">
                <path d="M0 .5h8v2H0z" fill="#6d6a70" />
              </svg>
            </button>
            <button aria-label="Restore">
              <svg width="11" height="10" viewBox="0 0 11 10" fill="none" stroke="#6d6a70" strokeWidth="1.300">
                <path d="M3.500 3V1h7v5H8M.7 3.700h7v5.500h-7z" />
              </svg>
            </button>
            <button aria-label="Close">
              <svg width="8" height="8" viewBox="0 0 8 8" stroke="#5c595f" strokeWidth="2">
                <path d="m.8.8 6.400 6.400M7.200.8.8 7.200" />
              </svg>
            </button>
          </WindowButtons>
        </TitleBar>

        <RibbonTabs>
          <RibbonTab $w={51} $kind="file">File</RibbonTab>
          <RibbonTab $w={64}>Home</RibbonTab>
          <RibbonTab $w={54}>View</RibbonTab>
          <RibbonTab $w={95}>Accounting</RibbonTab>
          <RibbonTab $w={147}>Demonstration Mode</RibbonTab>
          <RibbonTab $w={70} $kind="active">Team</RibbonTab>
          <HelpLink href="#help">
            <svg width="16" height="16" viewBox="0 0 16 16">
              <circle cx="8" cy="8" r="7.200" fill="#5d80bb" stroke="#a9bbd9" strokeWidth="1.500" />
              <circle cx="8" cy="8" r="5" fill="#2c4478" />
              <path d="M5.800 6.300c0-3 4.500-2.800 4.500-.3 0 1.700-2.300 1.700-2.300 3.500M8 11v1.500" fill="none" stroke="#fff" strokeWidth="1.600" />
            </svg>
            Online Help
          </HelpLink>
        </RibbonTabs>

        <Ribbon>
          <Group>
            <GroupBody>
              {bigButtons.map(([label, icon, w]) => (
                <BigButton key={label} $w={w}>
                  {icons[icon]}
                  {label}
                </BigButton>
              ))}
              <SmallColumn $w={172}>
                <SmallButton>{icons.rates}Show Billing Rates</SmallButton>
                <SmallButton>{icons.hours}Show Unposted Hours</SmallButton>
                <SmallButton $on>{icons.office}Allow Inter-Office Staffing</SmallButton>
              </SmallColumn>
              <SmallColumn $w={231}>
                <FieldRow $muted>
                  {icons.filterPerson}
                  <label htmlFor="emp">Employee filter:</label>
                  <SelectBox>
                    <select id="emp" disabled defaultValue="r">
                      <option value="r">By Role</option>
                    </select>
                    <Caret w={6} c="#8c898f" />
                  </SelectBox>
                </FieldRow>
                <FieldRow>
                  {icons.plan}
                  <label htmlFor="plan">Plan Status</label>
                  <SelectBox>
                    <select id="plan" defaultValue="o">
                      <option value="o">Open</option>
                    </select>
                    <Caret w={6} />
                  </SelectBox>
                </FieldRow>
              </SmallColumn>
            </GroupBody>
            <GroupLabel>Team</GroupLabel>
          </Group>
          <Divider />
          <Group>
            <GroupBody>
              <BigButton $w={86}>
                {icons.save}
                {"Save current\nview"}
              </BigButton>
              <BigButton $w={69}>
                {icons.discard}
                {"Discard\ncurrent view"}
              </BigButton>
              <SmallColumn $w={173}>
                <SmallButton>
                  <IconSlot>{icons.clipboard}</IconSlot>Copy Chart to Clipboard
                </SmallButton>
                <SmallButton>
                  <IconSlot>{icons.exportXls}</IconSlot>Export Tab to Excel
                </SmallButton>
              </SmallColumn>
            </GroupBody>
            <GroupLabel>Common</GroupLabel>
          </Group>
          <Divider />
          <Collapse aria-label="Collapse ribbon">
            <Chevron dir="up" w={9} />
          </Collapse>
        </Ribbon>

        <Workspace>
          <Sidebar>
            <SideHead>Active Projects (770)</SideHead>
            <ProjectList>
              <Project>3107.004.00 Deal Castle</Project>
            </ProjectList>
            <SideLink href="#opportunities">Opportunities</SideLink>
            <SideLink href="#marketing">Marketing</SideLink>
            <SideLink href="#overhead">Overhead</SideLink>
          </Sidebar>

          <Content>
            <TabStrip>
              <Tabs role="tablist">
                {viewTabs.map(([label, w, bg]) => (
                  <ViewTab key={label} role="tab" $w={w} $bg={bg} $active={label === "Team"}>
                    {label}
                  </ViewTab>
                ))}
              </Tabs>
              <TabNav>
                <button aria-label="All tabs">
                  <svg width="8" height="8" viewBox="0 0 8 8" fill="#1d3f8c">
                    <path d="M0 0h8v1.500H0zM0 3h8L4 8z" />
                  </svg>
                </button>
                <button aria-label="Previous tab">
                  <svg width="6" height="9" viewBox="0 0 6 9" fill="#1d3f8c">
                    <path d="M5.500 0v9L0 4.500z" />
                  </svg>
                </button>
                <button aria-label="Next tab">
                  <svg width="6" height="9" viewBox="0 0 6 9" fill="#1d3f8c">
                    <path d="M.5 0v9L6 4.500z" />
                  </svg>
                </button>
              </TabNav>
            </TabStrip>

            <Cards>
              <Card $grow={485}>
                <PieTitle $size={17}>Budget Detail</PieTitle>
                <Pie />
              </Card>
              <Card $grow={463}>
                <CardTitle $size={12}>Team by Experience Level</CardTitle>
                <MapFrame>
                  <MapGroup>
                    <MapLabel>Architecture</MapLabel>
                    <MapRow $h={96}>
                      <Tile $grow={161} $bg="#ffbf4e">Abbott, Susan</Tile>
                      <Tile $grow={76} $bg="#ffead0">{"Hinson,  Ther..."}</Tile>
                      <Tile $grow={73} $bg="#ffe2b2">Ball, Lynda</Tile>
                      <MapStack>
                        <Tile $grow={42} $bg="#fece7c">Washington,...</Tile>
                        <MapRow $h={43}>
                          <Tile $grow={1} $bg="#fece7c">D..</Tile>
                          <Tile $grow={1} $bg="#ffead0">B..</Tile>
                          <Tile $grow={1} $bg="#ffe2b2">B..</Tile>
                        </MapRow>
                      </MapStack>
                    </MapRow>
                  </MapGroup>
                </MapFrame>
              </Card>
            </Cards>

            <GroupPanel>
              <GroupChip>
                Phase <Asc />
              </GroupChip>
            </GroupPanel>

            <GridArea>
              <GridMain>
                <GridBody>
                  <Table>
                    <Cols />
                    <tbody>
                      <GroupRow name="Pre-Contract" open sums={["", "$ 81,150.00", "492", "416.5", "75.5", "$ 50,6"]} />
                      <tr>
                        <Indent />
                        <ChooserCell>
                          <FieldChooser />
                        </ChooserCell>
                        {darkHeads.map(([label, sorted]) => (
                          <Th key={label} $dark scope="col">
                            <ThInner>
                              <span>{label}</span>
                              {sorted ? <Asc /> : null}
                              <Funnel />
                              <Pin />
                            </ThInner>
                          </Th>
                        ))}
                        <Th $dark scope="col">
                          <ThInner>
                            <span>...</span>
                            <Funnel />
                            <Pin side />
                          </ThInner>
                        </Th>
                        {["Planned...", "JTD Plan...", "JTD Ac...", "Varia..."].map((label) => (
                          <Th key={label} scope="col">
                            <ThInner>
                              <span>{label}</span>
                              <Funnel />
                              <Pin side />
                            </ThInner>
                          </Th>
                        ))}
                        <Th scope="col">
                          <TextCell>ETC S</TextCell>
                        </Th>
                      </tr>
                      {rows.map((r, i) => (
                        <tr key={i}>
                          <Indent />
                          <Selector>
                            {i === 1 ? (
                              <svg width="5" height="9" viewBox="0 0 5 9">
                                <path d="M0 0v9l5-4.500z" fill="#111" />
                              </svg>
                            ) : null}
                          </Selector>
                          {r.map((c, j) => (
                            <Td key={j}>
                              {j < 3 ? <TextCell>{c}</TextCell> : j === 8 ? <CutCell>{c}</CutCell> : <NumCell>{c}</NumCell>}
                            </Td>
                          ))}
                        </tr>
                      ))}
                      <GroupRow name="Schematic Design" sums={["", "$ 604,800.00", "0", "2,794", "-2,794", "$ 604,"]} />
                      <GroupRow name="Design Development" sums={["", "$ 1,206,000.00", "0", "8,805.75", "-8,805.75", "$ 1,20"]} />
                    </tbody>
                  </Table>
                </GridBody>
                <Table>
                  <Cols />
                  <tbody>
                    <tr>
                      <FootTd $blank colSpan={5} />
                      {["0,027", "$ 2,465,505.00", "492", "13,186.5", "-12,694.5"].map((c) => (
                        <FootTd key={c}>
                          <NumCell $neg={c.startsWith("-")}>{c}</NumCell>
                        </FootTd>
                      ))}
                      <FootTd>
                        <FootCut>$ 2,43</FootCut>
                      </FootTd>
                    </tr>
                  </tbody>
                </Table>
              </GridMain>
              <VScroll>
                <Chevron dir="up" />
                <VThumb />
                <VRest />
                <Chevron dir="down" />
              </VScroll>
            </GridArea>
            <HScroll>
              <Chevron dir="left" />
              <HSpace $grow={375} />
              <HThumb />
              <HSpace $grow={296} />
              <Chevron dir="right" />
            </HScroll>
          </Content>
        </Workspace>

        <StatusBar>
          <Permission>
            <svg width="6" height="15" viewBox="0 0 6 15">
              <path d="M0 5.500h5.500v9H0z" fill="#5cab4f" stroke="#2e6b2a" />
              <path d="M0 1.500c2-.5 3.500.5 3.500 4" fill="none" stroke="#555" strokeWidth="1.500" />
            </svg>
            Permission: Edit
          </Permission>
          <StatusItem $gap={8} $ml={0}>
            Active Billing Period: Feb 2010 <Caret />
          </StatusItem>
          <StatusItem $gap={19} $ml={18}>
            Bob Rayes <Caret />
          </StatusItem>
          <StatusItem $gap={9} $ml={12}>
            Demo: 3/15/2010
            <svg width="12" height="12" viewBox="0 0 12 12">
              <circle cx="6" cy="6" r="5.700" fill="#3f9be8" />
              <path d="M6 2.200v1.600M6 5v4.500" stroke="#fff" strokeWidth="1.800" />
            </svg>
            <Caret />
          </StatusItem>
        </StatusBar>

        <Pointer width="13" height="20" viewBox="0 0 13 20">
          <path d="M1 1v15.500l3.700-3.500 2.500 5.700 2.300-1-2.400-5.500H12z" fill="#fff" stroke="#222" />
        </Pointer>
      </AppWindow>

      <Taskbar>
        <SystemButton $w={44} aria-label="Start">
          <svg width="16" height="16" viewBox="0 0 16 16" fill="#fff">
            <path d="m0 2.200 6.500-.9v6.200H0zM7.300 1.200 16 0v7.500H7.300zM0 8.400h6.500v6.300L0 13.800zM7.300 8.400H16V16l-8.700-1.200z" />
          </svg>
        </SystemButton>
        <SystemButton $w={51} aria-label="Cortana">
          <svg width="16" height="16" viewBox="0 0 16 16">
            <circle cx="8" cy="8" r="6.700" fill="none" stroke="#fff" strokeWidth="2" />
          </svg>
        </SystemButton>
        <SystemButton $w={48} aria-label="Task view">
          <svg width="20" height="15" viewBox="0 0 20 15" fill="none" stroke="#d8d8d8" strokeWidth="1.300">
            <path d="M4.500 1h11v13h-11zM2.700 3H.8v9h1.900M17.300 3h1.900v9h-1.900" />
          </svg>
        </SystemButton>
        <Apps>
          {apps.map((a) => (
            <AppButton key={a.name} aria-label={a.name} $run={a.run} $active={a.active}>
              {a.art}
            </AppButton>
          ))}
        </Apps>
        <TaskScroll>
          <Chevron dir="up" />
          <Chevron dir="down" />
        </TaskScroll>
        <Tray>
          <SystemButton $w={23} aria-label="Show hidden icons">
            <Chevron dir="up" w={13} c="#bdbdbd" />
          </SystemButton>
          <SystemButton $w={24} aria-label="Network">
            <svg width="17" height="17" viewBox="0 0 17 17">
              <circle cx="8.500" cy="8.500" r="8" fill="#2160a5" />
              <path d="M4 6h9M3 8.500h11M4 11h9" stroke="#194d88" strokeWidth="1.500" />
            </svg>
          </SystemButton>
          <SystemButton $w={24} aria-label="Battery">
            <svg width="17" height="13" viewBox="0 0 17 13" fill="none" stroke="#e0e0e0" strokeWidth="1.300">
              <path d="M5 4h10v6H5zM16.300 6v2M1 1h4v3.500H1zM3 5v5" />
              <path d="M7.500 6h5v2h-5z" fill="#e0e0e0" />
            </svg>
          </SystemButton>
          <SystemButton $w={24} aria-label="Wi-Fi">
            <svg width="14" height="14" viewBox="0 0 14 14" fill="none" stroke="#c9c9c9" strokeWidth="1.300">
              <path d="M1 13C1 6 6 1 13 1M4.300 13c0-5 3.700-8.700 8.700-8.700M7.500 13c0-3 2.500-5.500 5.500-5.500" />
              <circle cx="12" cy="12" r="1.500" fill="#fff" />
            </svg>
          </SystemButton>
          <SystemButton $w={23} aria-label="Volume">
            <svg width="16" height="13" viewBox="0 0 16 13" fill="none" stroke="#dcdcdc" strokeWidth="1.200">
              <path d="M1 4.500h2L6.500 1.500v10L3 8.500H1zM8.700 4.500c1 1.300 1 2.700 0 4M10.900 3c1.900 2.300 1.900 4.700 0 7M13 1.200c2.700 3.500 2.700 7.100 0 10.600" />
            </svg>
          </SystemButton>
          <SystemButton $w={28} aria-label="Action center">
            <svg width="16" height="15" viewBox="0 0 16 15">
              <path d="M0 0h16v11h-4.500L8 15v-4H0z" fill="#fff" />
              <path d="M3 3h10M3 5.500h10M3 8h7" stroke="#222" />
            </svg>
          </SystemButton>
        </Tray>
        <Clock>
          2:40 PM
          <br />
          10/10/2016
        </Clock>
      </Taskbar>
    </Shell>
  );
}
